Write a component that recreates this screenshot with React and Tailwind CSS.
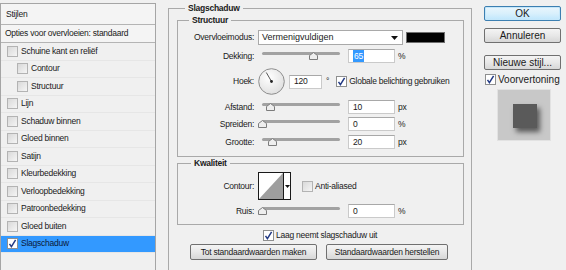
import React from 'react';

const STYLES = [
  { label: 'Schuine kant en reliëf', level: 0 },
  { label: 'Contour', level: 1 },
  { label: 'Structuur', level: 1 },
  { label: 'Lijn', level: 0 },
  { label: 'Schaduw binnen', level: 0 },
  { label: 'Gloed binnen', level: 0 },
  { label: 'Satijn', level: 0 },
  { label: 'Kleurbedekking', level: 0 },
  { label: 'Verloopbedekking', level: 0 },
  { label: 'Patroonbedekking', level: 0 },
  { label: 'Gloed buiten', level: 0 },
  { label: 'Slagschaduw', level: 0, checked: true, selected: true },
];

const Checkbox = ({ checked }) => (
  <span
    className={`flex h-[11px] w-[11px] shrink-0 items-center justify-center border ${
      checked
        ? 'border-[#8e8f8f] bg-white'
        : 'border-[#b3b3b3] bg-linear-to-br from-[#d9d9d9] to-[#f5f5f5]'
    }`}
  >
    {checked && (
      <svg width="9" height="9" viewBox="0 0 9 9">
        <path d="M1.5 4.8 L3.4 7.6 L7.6 0.8" fill="none" stroke="#233a84" strokeWidth="1.5" />
      </svg>
    )}
  </span>
);

// track + house-shaped thumb, `at` = thumb centre from the slider's left edge
const Slider = ({ at }) => (
  <div className="relative h-[14px] w-[86px] shrink-0">
    <div className="absolute left-[4px] right-[4px] top-[3px] h-[3px] rounded-full bg-[#a2a2a2]" />
    <svg className="absolute top-[3px]" style={{ left: at - 4 }} width="9" height="8" viewBox="0 0 9 8">
      <polygon points="0.5,3.5 4.5,0.5 8.5,3.5 8.5,7.5 0.5,7.5" fill="#eeeeee" stroke="#7c7c7c" />
    </svg>
  </div>
);

const Field = ({ value, selected, w = 'w-[47px]' }) => (
  <div className={`flex h-[14px] ${w} shrink-0 items-center border border-[#cacaca] border-t-[#a8a8a8] bg-white pl-[4px]`}>
    {selected ? <span className="bg-[#3399ff] px-[1px] text-white">{value}</span> : <span>{value}</span>}
  </div>
);

const Label = ({ children }) => (
  <span className="mr-[4px] w-[76px] shrink-0 text-right">{children}</span>
);

const SliderRow = ({ label, at, value, unit, className = '' }) => (
  <div className={`flex h-[14px] items-center ${className}`}>
    <Label>{label}</Label>
    <Slider at={at} />
    <div className="ml-[4px]">
      <Field value={value} />
    </div>
    <span className="ml-[3px]">{unit}</span>
  </div>
);

const Btn = ({ children, className = '' }) => (
  <div
    className={`flex items-center justify-center whitespace-nowrap rounded-[2px] border border-[#707070] bg-linear-to-b from-[#f4f4f4] via-[#e8e8e8] to-[#d7d7d7] ${className}`}
  >
    {children}
  </div>
);

export default function App() {
  return (
    <div className="flex h-[270px] w-[566px] items-start overflow-hidden bg-[#f0f0f0] font-['Liberation_Sans',Arial,sans-serif] text-[8.5px] tracking-[-0.25px] text-[#1a1a1a]">
      {/* ── Stijlen list ─────────────────────────────── */}
      <div className="mt-[3px] h-[280px] w-[156px] shrink-0 border border-[#a5a5a5] bg-[#f0f0f0]">
        <div className="flex h-[21px] items-center border-b border-[#b4b4b4] bg-[#f4f4f4] pl-[5px]">Stijlen</div>
        <div className="flex h-[18px] items-center border-b border-[#b4b4b4] bg-[#f4f4f4] pl-[4px]">
          Opties voor overvloeien: standaard
        </div>
        {STYLES.map((s) => (
          <div
            key={s.label}
            className={`flex h-[17.5px] items-center border-b border-[#e6e6e6] ${
              s.level ? 'pl-[16px]' : 'pl-[6px]'
            } ${s.selected ? 'bg-[#3399ff] text-[#0b1a3a]' : ''}`}
          >
            <Checkbox checked={s.checked} />
            <span className="ml-[3px]">{s.label}</span>
          </div>
        ))}
      </div>

      {/* ── Slagschaduw ─────────────────────────────── */}
      <fieldset className="ml-[12px] mt-[2px] h-[290px] w-[304px] shrink-0 border border-[#a9a9a9] pl-[8px] pr-[7px]">
        <legend className="ml-[8px] px-[3px] text-[8.5px] leading-[13px] font-bold">Slagschaduw</legend>

        <fieldset className="-mt-[1px] border border-[#a9a9a9] pb-[7px]">
          <legend className="ml-[11px] px-[3px] leading-[13px] font-bold">Structuur</legend>

          <div className="mt-[3px] flex h-[15px] items-center">
            <Label>Overvloeimodus:</Label>
            <div className="flex h-[15px] w-[145px] items-center justify-between border border-[#a9a9a9] bg-white pl-[3px] pr-[4px] text-[9px] tracking-normal">
              <span>Vermenigvuldigen</span>
              <svg width="7" height="4" viewBox="0 0 7 4">
                <polygon points="0,0 7,0 3.5,4" fill="#111" />
              </svg>
            </div>
            <div className="ml-[3px] h-[11px] w-[39px] border border-[#6f6f6f] bg-black" />
          </div>

          <div className="mt-[4px] flex h-[14px] items-center">
            <Label>Dekking:</Label>
            <Slider at={55} />
            <div className="ml-[4px]">
              <Field value="65" selected />
            </div>
            <span className="ml-[3px]">%</span>
          </div>

          <div className="mt-[5px] flex h-[27px] items-center">
            <Label>Hoek:</Label>
            <svg width="27" height="27" viewBox="0 0 27 27" className="shrink-0">
              <defs>
                <radialGradient id="dial" cx="0.4" cy="0.35" r="0.7">
                  <stop offset="0" stopColor="#ffffff" />
                  <stop offset="1" stopColor="#dedede" />
                </radialGradient>
              </defs>
              <circle cx="13.5" cy="13.5" r="12.8" fill="url(#dial)" stroke="#8d8d8d" />
              <line x1="13.5" y1="13.5" x2="8.3" y2="4.5" stroke="#555" strokeWidth="1" />
              <circle cx="13.5" cy="13.5" r="1.4" fill="#222" />
            </svg>
            <div className="ml-[4px]">
              <Field value="120" w="w-[33px]" />
            </div>
            <span className="ml-[4px]">°</span>
            <div className="ml-[7px]">
              <Checkbox checked />
            </div>
            <span className="ml-[2px]">Globale belichting gebruiken</span>
          </div>

          <SliderRow label="Afstand:" at={12} value="10" unit="px" className="mt-[5px]" />
          <SliderRow label="Spreiden:" at={4} value="0" unit="%" className="mt-[3px]" />
          <SliderRow label="Grootte:" at={14} value="20" unit="px" className="mt-[4px]" />
        </fieldset>

        <fieldset className="border border-[#a9a9a9] pb-[6px]">
          <legend className="ml-[13px] px-[3px] leading-[13px] font-bold">Kwaliteit</legend>

          <div className="mt-[2px] flex h-[28px] items-center">
            <Label>Contour:</Label>
            <div className="flex h-[28px] w-[33px] border border-[#1a1a1a] bg-white">
              <svg width="24" height="26" viewBox="0 0 24 26">
                <polygon points="0,26 24,0 24,26" fill="#9e9e9e" />
              </svg>
              <div className="flex flex-1 items-center justify-center border-l border-[#1a1a1a]">
                <svg width="5" height="3" viewBox="0 0 5 3">
                  <polygon points="0,0 5,0 2.5,3" fill="#111" />
                </svg>
              </div>
            </div>
            <div className="ml-[11px]">
              <Checkbox />
            </div>
            <span className="ml-[2px]">Anti-aliased</span>
          </div>

          <SliderRow label="Ruis:" at={4} value="0" unit="%" className="mt-[4px]" />
        </fieldset>

        <div className="mt-[4px] flex h-[12px] items-center pl-[86px]">
          <Checkbox checked />
          <span className="ml-[2px]">Laag neemt slagschaduw uit</span>
        </div>

        <div className="mt-[3px] flex gap-[9px] pl-[13px]">
          <Btn className="h-[16px] w-[127px]">Tot standaardwaarden maken</Btn>
          <Btn className="h-[16px] w-[122px]">Standaardwaarden herstellen</Btn>
        </div>
      </fieldset>

      {/* ── Buttons + preview ─────────────────────────── */}
      <div className="ml-[12px] flex w-[77px] shrink-0 flex-col text-[10px] tracking-normal">
        <div className="mt-[6px] flex h-[15px] items-center justify-center rounded-[2px] border border-[#3c7fb1] bg-linear-to-b from-[#eaf6fd] via-[#d9f0fc] to-[#bee6fd] shadow-[inset_0_0_0_1px_#c5e7fa]">
          OK
        </div>
        <Btn className="mt-[7px] h-[15px]">Annuleren</Btn>
        <Btn className="mt-[12px] h-[15px]">Nieuwe stijl...</Btn>
        <div className="mt-[3px] flex h-[12px] items-center pl-[1px]">
          <Checkbox checked />
          <span className="ml-[2px]">Voorvertoning</span>
        </div>
        <div className="ml-[13px] mt-[4px] h-[52px] w-[54px] border border-[#e2e2e2] bg-[#c8c8c8] pl-[15px] pt-[14px]">
          <div className="h-[24px] w-[24px] bg-[#5a5a5a] shadow-[3px_4px_5px_rgba(0,0,0,0.55)]" />
        </div>
      </div>
    </div>
  );
}
